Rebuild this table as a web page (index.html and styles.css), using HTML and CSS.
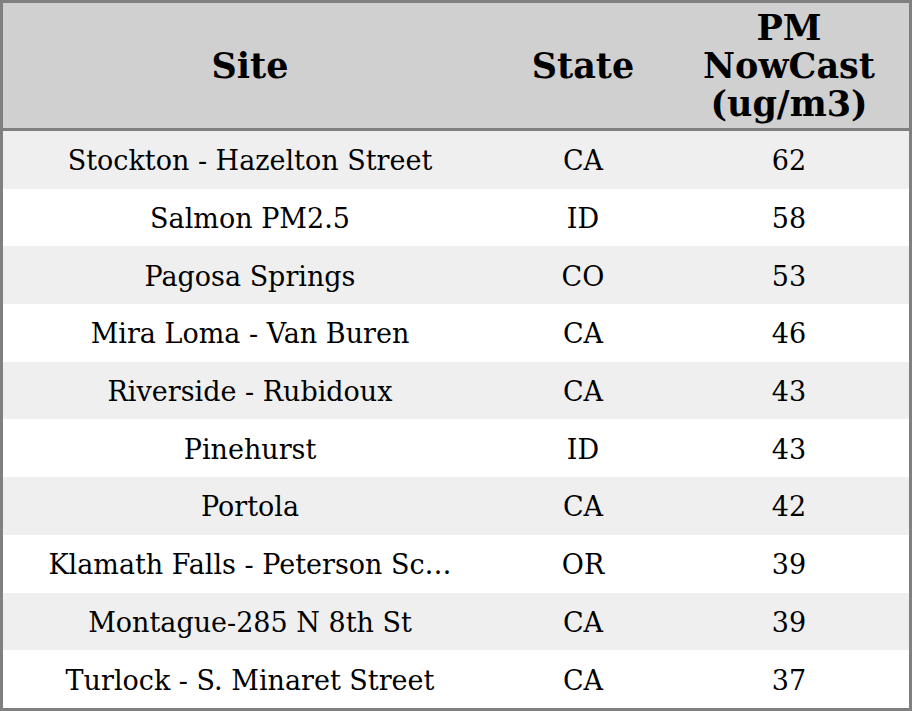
FILE: index.html
```html
<!DOCTYPE html>
<html>
<head>
<meta charset="utf-8">
<link rel="stylesheet" href="styles.css">
</head>
<body>
<table class="pm-table">
  <colgroup>
    <col class="col-site">
    <col class="col-state">
    <col class="col-pm">
  </colgroup>
  <thead>
    <tr class="head-row">
      <th>Site</th>
      <th>State</th>
      <th>PM<br>NowCast<br>(ug/m3)</th>
    </tr>
  </thead>
  <tbody>
    <tr><td>Stockton - Hazelton Street</td><td>CA</td><td>62</td></tr>
    <tr><td>Salmon PM2.5</td><td>ID</td><td>58</td></tr>
    <tr><td>Pagosa Springs</td><td>CO</td><td>53</td></tr>
    <tr><td>Mira Loma - Van Buren</td><td>CA</td><td>46</td></tr>
    <tr><td>Riverside - Rubidoux</td><td>CA</td><td>43</td></tr>
    <tr><td>Pinehurst</td><td>ID</td><td>43</td></tr>
    <tr><td>Portola</td><td>CA</td><td>42</td></tr>
    <tr><td><span class="clip" title="Klamath Falls - Peterson School">Klamath Falls - Peterson Sc…</span></td><td>OR</td><td>39</td></tr>
    <tr><td>Montague-285 N 8th St</td><td>CA</td><td>39</td></tr>
    <tr><td>Turlock - S. Minaret Street</td><td>CA</td><td>37</td></tr>
  </tbody>
</table>
</body>
</html>
```

FILE: styles.css
```css
html, body {
  margin: 0;
  padding: 0;
  background: #ffffff;
}

.pm-table {
  box-sizing: border-box;
  width: 912px;
  height: 711px;
  border: 3px solid #808080;
  border-collapse: separate;
  border-spacing: 0;
  table-layout: fixed;
  font-family: "DejaVu Serif", serif;
  color: #000;
}

.col-site { width: 494px; }
.col-state { width: 172px; }
.col-pm { width: 240px; }

.head-row th {
  height: 125px;
  background: #d0d0d0;
  border-bottom: 3px solid #808080;
  font-size: 35px;
  font-weight: bold;
  line-height: 38px;
  padding: 0;
  text-align: center;
  vertical-align: middle;
}

tbody td {
  height: 55.7px;
  padding: 2px 0 0;
  font-size: 27px;
  text-align: center;
  vertical-align: middle;
  white-space: nowrap;
  overflow: hidden;
}

tbody tr:nth-child(odd) td { background: #efefef; }
tbody tr:nth-child(even) td { background: #ffffff; }

.clip {
  white-space: nowrap;
}
```
